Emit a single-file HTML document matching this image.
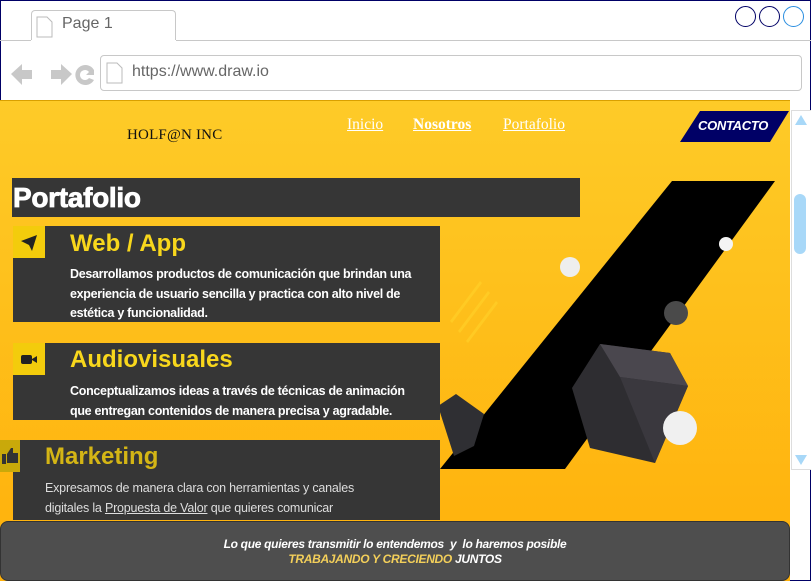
<!DOCTYPE html>
<html><head><meta charset="utf-8"><style>
*{margin:0;padding:0;box-sizing:border-box}
body{width:811px;height:581px;overflow:hidden;background:#fff;font-family:"Liberation Sans",sans-serif;position:relative}
.abs{position:absolute}
.frame{left:0;top:0;width:811px;height:581px;border:1px solid #000066}
.card{background:#363636;position:absolute}
.card h2{position:absolute;font-weight:bold;font-size:24px;color:#f8d71c}
.card p{position:absolute;font-size:12.5px;line-height:19.5px;color:#fff;font-weight:bold;letter-spacing:-0.3px}
.ic{position:absolute;background:#f3cc0c;width:32px;height:32px}
</style></head><body>
<div class="abs frame"></div>
<div class="abs" style="left:31px;top:10px;width:145px;height:31px;border:1px solid #c8c8c8;border-bottom:none;border-radius:4px 4px 0 0;background:#fff"></div>
<div class="abs" style="left:0;top:40px;width:811px;height:1px;background:#c8c8c8"></div>
<div class="abs" style="left:31px;top:40px;width:145px;height:2px;background:#fff"></div>
<svg class="abs" style="left:36px;top:16px" width="18" height="22"><path d="M1 1h10l5 5v15H1z" fill="#fff" stroke="#bbb"/></svg>
<div class="abs" style="left:62px;top:15px;font-size:16px;color:#666">Page 1</div>
<div class="abs" style="left:735px;top:6px;width:21px;height:21px;border:1.5px solid #000066;border-radius:50%"></div>
<div class="abs" style="left:759px;top:6px;width:21px;height:21px;border:1.5px solid #000066;border-radius:50%"></div>
<div class="abs" style="left:783px;top:6px;width:21px;height:21px;border:1.5px solid #2a8ee0;border-radius:50%"></div>
<svg class="abs" style="left:10px;top:62px" width="86" height="26"><path d="M1 12l11-10v6h10v9H12v6z" fill="#c8c8c8"/><path d="M62 12L51 2v6H41v9h10v6z" fill="#c8c8c8"/><path d="M84 8a10 10 0 1 0 0 10l-5-2a5 5 0 1 1 0-6l-3 3h8V5z" fill="#c8c8c8"/></svg>
<div class="abs" style="left:100px;top:55px;width:702px;height:36px;border:1px solid #c8c8c8;border-radius:4px"></div>
<svg class="abs" style="left:106px;top:62px" width="18" height="22"><path d="M1 1h10l5 5v15H1z" fill="#fff" stroke="#bbb"/></svg>
<div class="abs" style="left:132px;top:63px;font-size:16px;color:#666">https://www.draw.io</div>
<div class="abs" style="left:0;top:100px;width:790px;height:481px;background:linear-gradient(#fecb28,#ffb00a);border-top:1px solid #d9a000;overflow:hidden">
 <div class="abs" style="left:127px;top:26px;font-family:'Liberation Serif',serif;font-size:15px;color:#111;letter-spacing:0.2px">HOLF@N INC</div>
 <div class="abs" style="left:347px;top:15px;font-family:'Liberation Serif',serif;font-size:15.5px;color:#fff;text-decoration:underline">Inicio</div>
 <div class="abs" style="left:413px;top:15px;font-family:'Liberation Serif',serif;font-size:15.5px;color:#fff;text-decoration:underline;font-weight:bold">Nosotros</div>
 <div class="abs" style="left:503px;top:15px;font-family:'Liberation Serif',serif;font-size:15.5px;color:#fff;text-decoration:underline">Portafolio</div>
 <svg class="abs" style="left:680px;top:10px" width="110" height="31"><path d="M20 0H109L90 31H0z" fill="#000066"/></svg>
 <div class="abs" style="left:698px;top:17px;font-size:13px;font-weight:bold;font-style:italic;color:#fff;letter-spacing:-0.3px">CONTACTO</div>
 <svg class="abs" style="left:0;top:0" width="790" height="481"><path d="M672 80H775L565 368H440z" fill="#000"/>
  <g fill="#ffd22a" opacity=".6"><path d="M450 220l30-40 2 2-30 40zM458 230l30-40 2 2-30 40zM466 240l30-40 2 2-30 40z"/></g>
  <path d="M600 243L670 252L688 285L655 362L590 347L572 287z" fill="#2e2d31"/>
  <path d="M600 243L670 252L688 285L620 276z" fill="#4a474e"/>
  <path d="M620 276L688 285L655 362z" fill="#3a383e"/>
  <path d="M438 305l18-12 28 20-10 32-20 10z" fill="#2f2f33"/>
  <circle cx="570" cy="166" r="10" fill="#eee"/><circle cx="726" cy="143" r="7" fill="#f4f4f4"/><circle cx="676" cy="212" r="12" fill="#4a4a4a"/><circle cx="680" cy="327" r="17" fill="#f0f0f0"/></svg>
 <div class="abs" style="left:12px;top:77px;width:568px;height:39px;background:#363636;color:#fff;font-size:28px;font-weight:900;padding:4px 0 0 1px;letter-spacing:-0.3px;-webkit-text-stroke:0.8px #fff">Portafolio</div>
 <div class="card" style="left:13px;top:125px;width:427px;height:96px"><div class="ic" style="left:0;top:0"><svg width="32" height="32"><path d="M8 15l16-6-5 16-3-6z" fill="#222"/></svg></div><h2 style="left:57px;top:4px">Web / App</h2><p style="left:57px;top:39px;width:365px">Desarrollamos productos de comunicación que brindan una experiencia de usuario sencilla y practica con alto nivel de estética y funcionalidad.</p></div>
 <div class="card" style="left:13px;top:242px;width:427px;height:77px"><div class="ic" style="left:0;top:0"><svg width="32" height="32"><rect x="8" y="12" width="11" height="9" rx="2" fill="#222"/><path d="M19 16l5-3v7l-5-3z" fill="#222"/></svg></div><h2 style="left:57px;top:3px">Audiovisuales</h2><p style="left:57px;top:39px;width:355px">Conceptualizamos ideas a través de técnicas de animación que entregan contenidos de manera precisa y agradable.</p></div>
 <div class="card" style="left:13px;top:339px;width:427px;height:80px"><div class="ic" style="left:-13px;top:0;background:#c9a90a;width:20px"><svg width="20" height="32"><path d="M2 14h4v10H2zM7 14l4-6h2v5h5v10H7z" fill="#333"/></svg></div><h2 style="left:32px;top:3px;color:#d4b515">Marketing</h2><p style="left:32px;top:39px;width:345px;color:#ddd;font-weight:normal;letter-spacing:-0.2px">Expresamos de manera clara con herramientas y canales digitales la <u>Propuesta de Valor</u> que quieres comunicar</p></div>
 <div class="abs" style="left:0;top:420px;width:790px;height:60px;background:#4e4e4e;border:1px solid #333;border-radius:8px;text-align:center;font-size:12px;font-weight:bold;font-style:italic;color:#fff;padding-top:15px;line-height:15px;letter-spacing:-0.3px">Lo que quieres transmitir lo entendemos &nbsp;y &nbsp;lo haremos posible<br><span style="color:#f3cf5a">TRABAJANDO Y CRECIENDO</span> JUNTOS</div>
</div>
<div class="abs" style="left:791px;top:110px;width:20px;height:360px;background:#fff;border-left:1px solid #ddd;border-top:1px solid #ddd;border-bottom:1px solid #ddd"></div>
<svg class="abs" style="left:793px;top:114px" width="16" height="12"><path d="M8 1l6 10H2z" fill="#a8d8f8"/></svg>
<svg class="abs" style="left:793px;top:454px" width="16" height="12"><path d="M8 11L14 1H2z" fill="#a8d8f8"/></svg>
<div class="abs" style="left:794px;top:194px;width:12px;height:60px;background:#a8d8f8;border-radius:6px"></div>
</body></html>
